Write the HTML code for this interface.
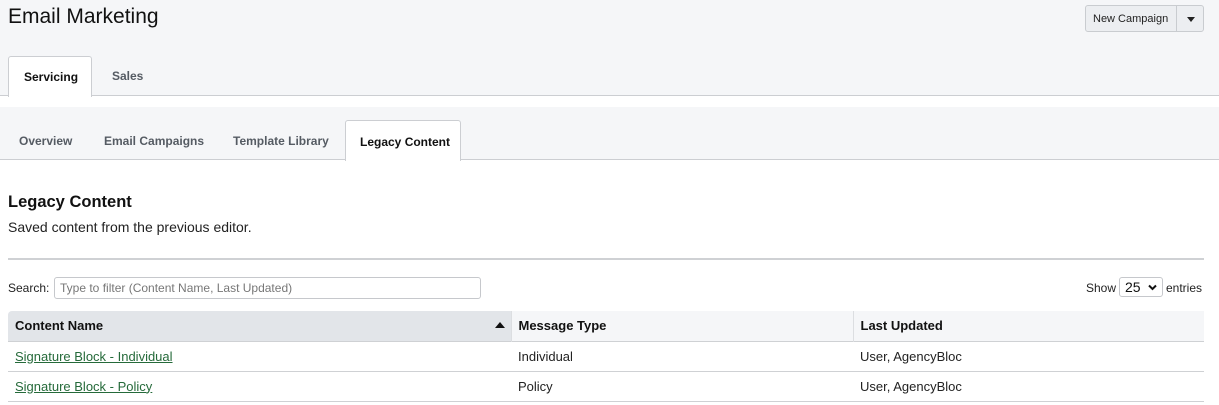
<!DOCTYPE html>
<html><head><style>
*{box-sizing:border-box;margin:0;padding:0}
body{width:1219px;height:405px;overflow:hidden;background:#fff;font-family:"Liberation Sans",sans-serif;color:#111;position:relative;font-size:13px}
.top{position:absolute;left:0;top:0;width:1219px;height:96px;background:#f5f6f8;border-bottom:1px solid #ccced2}
h1{position:absolute;left:8px;top:5px;font-size:21px;font-weight:normal;color:#111}
.btn{position:absolute;left:1085px;top:5px;width:119px;height:27px;border:1px solid #c9ccd0;border-radius:3px;background:#eceef1;font-size:11px}
.btn span{position:absolute;left:7px;top:7px;color:#222}
.btn i{position:absolute;left:90px;top:0;width:1px;height:25px;background:#c9ccd0}
.btn b{position:absolute;left:101px;top:11px;border-left:4px solid transparent;border-right:4px solid transparent;border-top:5px solid #222}
.tab{position:absolute;font-weight:bold;font-size:12px;color:#555b63}
.act{background:#fff;border:1px solid #ccced2;border-bottom:none;border-radius:3px 3px 0 0;color:#111}
.bar2{position:absolute;left:0;top:107px;width:1219px;height:53px;background:#f5f6f8;border-bottom:1px solid #ccced2}
h2{position:absolute;left:8px;top:193px;font-size:16.5px;font-weight:bold}
.sub{position:absolute;left:8px;top:219px;font-size:14px;color:#222}
.sep{position:absolute;left:8px;top:258px;width:1196px;height:2px;background:#cfd1d4}
.lbl{position:absolute;font-size:12px;color:#222}
.inp{position:absolute;left:54px;top:277px;width:427px;height:22px;border:1px solid #c6c8cc;border-radius:3px;font-size:12px;color:#777;padding:3px 5px}
.sel{position:absolute;left:1119px;top:277px;width:44px;height:20px;border:1px solid #c6c8cc;border-radius:3px;font-size:14px;padding:0 5px;line-height:18px}
table{position:absolute;left:8px;top:311px;width:1196px;border-collapse:collapse}
th{height:30px;text-align:left;font-size:13px;padding-left:7px;background:#f5f6f8;border-left:1px solid #dcdee1}
th:first-child{background:#e2e5e9;border-left:none;border-radius:4px 0 0 0}
td{height:30px;font-size:13px;padding-left:7px;border-top:1px solid #cfd1d4;color:#222}
tr:last-child td{border-bottom:1px solid #cfd1d4}
a{color:#256a3a;text-decoration:underline}
</style></head><body>
<div class="top"></div>
<h1>Email Marketing</h1>
<div class="btn"><span>New Campaign</span><i></i><b></b></div>
<div class="tab act" style="left:8px;top:56px;width:84px;height:41px;padding:13px 0 0 15px">Servicing</div>
<div class="tab" style="left:112px;top:69px">Sales</div>
<div class="bar2"></div>
<div class="tab" style="left:19px;top:134px">Overview</div>
<div class="tab" style="left:104px;top:134px">Email Campaigns</div>
<div class="tab" style="left:233px;top:134px">Template Library</div>
<div class="tab act" style="left:345px;top:120px;width:116px;height:41px;padding:14px 0 0 14px">Legacy Content</div>
<h2>Legacy Content</h2>
<div class="sub">Saved content from the previous editor.</div>
<div class="sep"></div>
<div class="lbl" style="left:8px;top:281px">Search:</div>
<div class="inp">Type to filter (Content Name, Last Updated)</div>
<div class="lbl" style="left:1086px;top:281px">Show</div>
<div class="sel">25<svg style="position:absolute;right:5px;top:6px" width="9" height="7" viewBox="0 0 9 7"><path d="M1 1.5L4.5 5L8 1.5" fill="none" stroke="#111" stroke-width="2"/></svg></div>
<div class="lbl" style="left:1166px;top:281px">entries</div>
<table>
<tr><th style="width:503px;position:relative">Content Name<span style="position:absolute;right:6px;top:11px;border-left:5px solid transparent;border-right:5px solid transparent;border-bottom:6px solid #111"></span></th><th style="width:342px">Message Type</th><th>Last Updated</th></tr>
<tr><td><a>Signature Block - Individual</a></td><td>Individual</td><td>User, AgencyBloc</td></tr>
<tr><td><a>Signature Block - Policy</a></td><td>Policy</td><td>User, AgencyBloc</td></tr>
</table>
</body></html>
